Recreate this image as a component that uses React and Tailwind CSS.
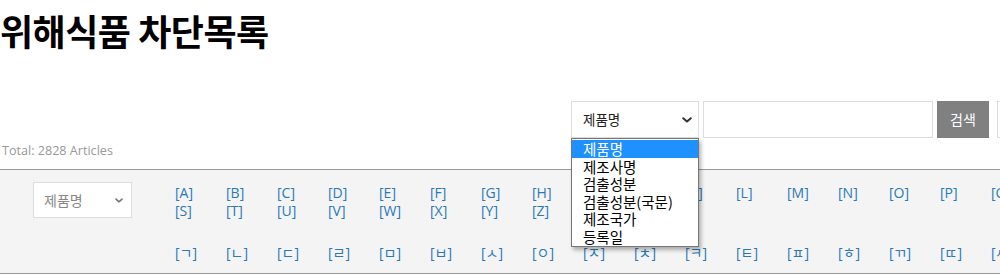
import React from 'react'

const latin = ['A','B','C','D','E','F','G','H','I','J','K','L','M','N','O','P','Q','R','S','T','U','V','W','X','Y','Z']
const hangul = ['ㄱ','ㄴ','ㄷ','ㄹ','ㅁ','ㅂ','ㅅ','ㅇ','ㅈ','ㅊ','ㅋ','ㅌ','ㅍ','ㅎ','ㄲ','ㄸ','ㅆ','ㅉ']
const options = ['제품명', '제조사명', '검출성분', '검출성분(국문)', '제조국가', '등록일']

function Chevron({ className }) {
  return (
    <svg viewBox="0 0 10 6" className={className} fill="none" stroke="currentColor" strokeWidth="2" strokeLinecap="round" strokeLinejoin="round">
      <path d="M1.2 1.2 5 4.6 8.8 1.2" />
    </svg>
  )
}

function LetterList({ items }) {
  return (
    <ul className="flex flex-wrap w-[918px] shrink-0">
      {items.map((l) => (
        <li key={l} className="w-[51px] h-[18px] leading-[18px]">
          <a href="#" className="text-[#2a78b8] text-[14px]">[{l}]</a>
        </li>
      ))}
    </ul>
  )
}

export default function App() {
  return (
    <div className="relative w-[1000px] h-[276px] overflow-hidden bg-white font-['Open_Sans','Noto_Sans_CJK_KR',sans-serif] text-[#333]">
      <h1 className="pt-[4px] h-[60px] text-[36px] font-bold leading-[52px] text-black tracking-[-0.5px] font-['Noto_Sans_CJK_KR',sans-serif]">위해식품 차단목록</h1>

      {/* search */}
      <div className="flex items-center mt-[41px] ml-[571px] h-[37px]">
        <div className="flex items-center justify-between shrink-0 w-[128px] h-[37px] pl-[11px] pr-[6px] bg-white border border-[#ddd] text-[13.5px] text-[#222] font-['Noto_Sans_CJK_KR',sans-serif]">
          <span>제품명</span>
          <Chevron className="w-[10px] h-[6px] text-[#333]" />
        </div>
        <input className="shrink-0 ml-[4px] w-[230px] h-[37px] border border-[#ddd] bg-white outline-none" />
        <button className="shrink-0 ml-[4px] w-[52px] h-[37px] bg-[#808080] text-white text-[14px] font-['Noto_Sans_CJK_KR',sans-serif]">검색</button>
        <div className="shrink-0 ml-[8px] w-[60px] h-[37px] border border-[#ddd] bg-white" />
      </div>

      <div className="mt-[1px] h-[30px] pl-[2px] leading-[24px] text-[12.6px] text-[#999]">Total: 2828 Articles</div>

      {/* index band */}
      <div className="flex h-[105px] bg-[#f4f4f4] border-y border-[#999]">
        <div className="flex items-center justify-between shrink-0 ml-[33px] mt-[12px] w-[99px] h-[36px] pl-[10px] pr-[8px] bg-white border border-[#ddd] text-[14px] text-[#888] font-['Noto_Sans_CJK_KR',sans-serif]">
          <span>제품명</span>
          <Chevron className="w-[8px] h-[5px] text-[#777]" />
        </div>
        <div className="ml-[43px] pt-[13px] font-['Open_Sans','Noto_Sans_CJK_KR',sans-serif]">
          <LetterList items={latin} />
          <div className="mt-[24px]">
            <LetterList items={hangul} />
          </div>
        </div>
      </div>

      {/* open select menu */}
      <ul className="absolute top-[138px] left-[571px] z-10 w-[128px] py-[1px] bg-white border border-[#767676] shadow-[2px_3px_4px_rgba(0,0,0,0.3)] text-[14.5px] leading-[17.5px] text-black font-['Noto_Sans_CJK_KR',sans-serif]">
        {options.map((o, i) => (
          <li key={o} className={`pl-[11px] ${i === 0 ? 'bg-[#1e90ff] text-white' : ''}`}>{o}</li>
        ))}
      </ul>
    </div>
  )
}
